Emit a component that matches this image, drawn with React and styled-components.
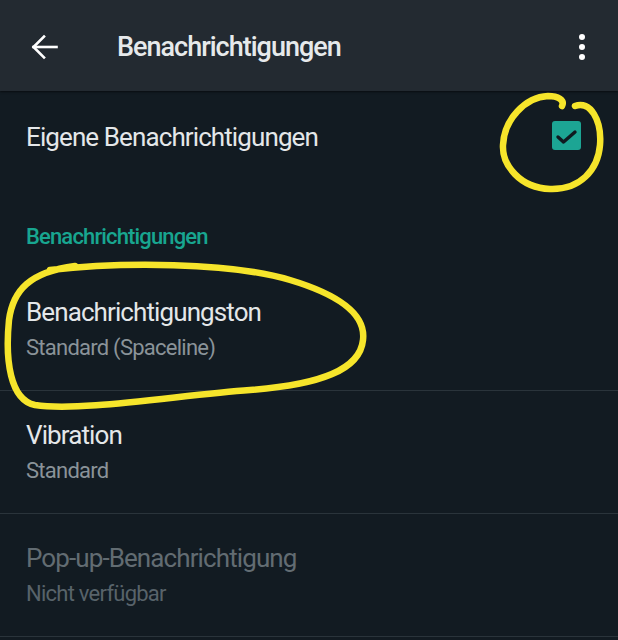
import React from 'react';
import styled, { createGlobalStyle } from 'styled-components';

const GlobalStyle = createGlobalStyle`
  html, body {
    margin: 0;
    padding: 0;
    background: #121b22;
  }
  body {
    font-family: Roboto, "Noto Sans", "Liberation Sans", sans-serif;
  }
`;

const Screen = styled.div`
  position: relative;
  width: 618px;
  height: 640px;
  overflow: hidden;
  background: #121b22;
`;

const Toolbar = styled.header`
  display: flex;
  align-items: center;
  height: 91px;
  padding: 3px 0 0 26px;
  box-sizing: border-box;
  background: #232a31;
  box-shadow: 0 1px 2px rgba(0, 0, 0, 0.55);
  position: relative;
  z-index: 1;
`;

const IconButton = styled.button`
  display: flex;
  align-items: center;
  justify-content: center;
  width: ${(props) => props.$size}px;
  height: 40px;
  padding: 0;
  border: none;
  background: none;
  color: #ffffff;
`;

const Title = styled.h1`
  flex: 1;
  margin: 0 0 0 55px;
  font-size: 27px;
  font-weight: 500;
  letter-spacing: -1px;
  line-height: 32px;
  color: #e6e9eb;
`;

const ToggleRow = styled.div`
  display: flex;
  align-items: center;
  justify-content: space-between;
  height: 92px;
  padding: 0 37px 0 26px;
`;

const Label = styled.div`
  font-size: 26px;
  letter-spacing: -0.9px;
  line-height: 30px;
  color: ${(props) => (props.$disabled ? '#626c72' : '#e4e7e9')};
`;

const Checkbox = styled.span`
  display: flex;
  align-items: center;
  justify-content: center;
  width: 29px;
  height: 29px;
  margin-top: -3px;
  border-radius: 3px;
  background: #1ca594;
`;

const SectionHeader = styled.div`
  padding: 39px 26px 16px;
  font-size: 22px;
  font-weight: 500;
  letter-spacing: -0.85px;
  line-height: 30px;
  color: #18a690;
`;

const ListItem = styled.div`
  display: flex;
  flex-direction: column;
  height: 123px;
  box-sizing: border-box;
  padding: 29px 26px 0;
  border-bottom: 1px solid #2a343b;
`;

const Summary = styled.div`
  margin-top: 7px;
  font-size: 22px;
  letter-spacing: -0.75px;
  line-height: 28px;
  color: ${(props) => (props.$disabled ? '#58636a' : '#8a9399')};
`;

const Scribbles = styled.svg`
  position: absolute;
  inset: 0;
  pointer-events: none;
  z-index: 2;
`;

const items = [
  { title: 'Benachrichtigungston', summary: 'Standard (Spaceline)' },
  { title: 'Vibration', summary: 'Standard' },
  { title: 'Pop-up-Benachrichtigung', summary: 'Nicht verfügbar', disabled: true },
];

function BackArrow() {
  return (
    <svg width="30" height="30" viewBox="0 0 30 30" fill="none" stroke="currentColor" strokeWidth="2.6" strokeLinecap="square">
      <path d="M4.5 15H27.5" />
      <path d="M15 4.5L4.5 15L15 25.5" />
    </svg>
  );
}

function MoreDots() {
  return (
    <svg width="8" height="30" viewBox="0 0 8 30" fill="currentColor">
      <circle cx="4" cy="5" r="3" />
      <circle cx="4" cy="15" r="3" />
      <circle cx="4" cy="25" r="3" />
    </svg>
  );
}

export default function App() {
  return (
    <Screen>
      <GlobalStyle />
      <Toolbar>
        <IconButton $size={36} aria-label="Zurück">
          <BackArrow />
        </IconButton>
        <Title>Benachrichtigungen</Title>
        <IconButton $size={72} aria-label="Mehr Optionen">
          <MoreDots />
        </IconButton>
      </Toolbar>

      <ToggleRow>
        <Label>Eigene Benachrichtigungen</Label>
        <Checkbox>
          <svg width="29" height="29" viewBox="0 0 29 29" fill="none" stroke="#0f1a20" strokeWidth="3.4" strokeLinecap="round" strokeLinejoin="round">
            <path d="M6 16L11.5 21L23 11" />
          </svg>
        </Checkbox>
      </ToggleRow>

      <SectionHeader>Benachrichtigungen</SectionHeader>

      {items.map((item) => (
        <ListItem key={item.title}>
          <Label $disabled={item.disabled}>{item.title}</Label>
          <Summary $disabled={item.disabled}>{item.summary}</Summary>
        </ListItem>
      ))}

      <Scribbles width="618" height="640" viewBox="0 0 618 640" fill="none" stroke="#f6e52b" strokeWidth="6.5" strokeLinecap="round" strokeLinejoin="round">
        <path d="M575 106 C590 100 602 120 600 145 C598 170 580 190 550 189 C520 188 502 165 503 145 C504 120 525 97 548 96 C558 96 565 100 562 106" />
        <path d="M50 270 C120 262 230 262 290 280 C340 295 366 315 363 340 C360 370 320 385 250 390 C180 395 80 412 35 405 C10 400 5 360 9 320 C13 290 30 272 75 266" />
      </Scribbles>
    </Screen>
  );
}
